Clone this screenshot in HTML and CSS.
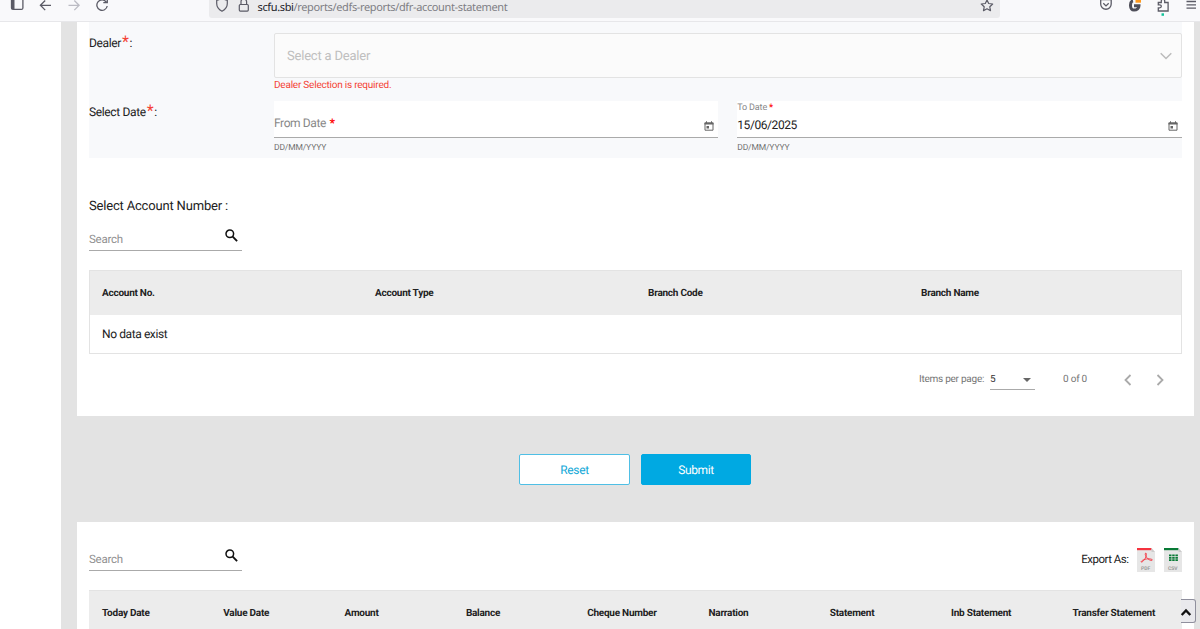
FILE: index.html
```
<!DOCTYPE html>
<html lang="en">
<head>
<meta charset="utf-8">
<title>Account Statement</title>
<link rel="stylesheet" href="styles.css">
</head>
<body>
<header class="browser">
  <svg class="nav-icons" width="120" height="21" viewBox="0 0 120 21" fill="none" stroke="#5b5b66" stroke-width="1.3">
    <rect x="11.5" y="-2" width="11.4" height="11.4" rx="1.5"/><path d="M13 0v9" stroke-width="3"/>
    <path d="M51 5.3H40.5M45.2.5l-4.8 4.8 4.8 4.8"/>
    <path d="M68.500 5.300H79M74.300.5l4.800 4.800-4.800 4.800" stroke="#bcbcc4"/>
    <path d="M106.200 2A5.200 5.200 0 1 0 107.200 6M107.300-1v3.700h-4"/>
  </svg>
  <div class="address">
    <svg width="40" height="18" viewBox="0 0 40 18" fill="none" stroke="#5b5b66" stroke-width="1.2"><path d="M7-1.500l5.300 2v3c0 3.500-2 6-5.300 7.700C3.700 9.500 1.700 7 1.700 3.500v-3z"/><rect x="24.300" y="4.500" width="9" height="6.600" rx="1"/><path d="M26 4.500V1.800a2.800 2.800 0 0 1 5.600 0v2.700"/></svg>
    <span class="url"><b>scfu.sbi</b>/reports/edfs-reports/dfr-account-statement</span>
    <svg class="star" width="14" height="18" viewBox="0 0 14 18" fill="none" stroke="#5b5b66" stroke-width="1.2" stroke-linejoin="round"><path d="M7 0l1.700 3.500 4 .5-2.900 2.800.7 3.900L7 8.800l-3.500 1.900.7-3.900L1.300 4l4-.5z"/></svg>
  </div>
  <svg class="tools" width="110" height="21" viewBox="1090 0 110 21" fill="none" stroke="#5b5b66" stroke-width="1.300">
    <path d="M1100.700-.5h10.500v4.500a5.250 5.250 0 0 1-10.500 0zM1103.300 3.300l2.700 2.600 2.700-2.600"/>
    <path d="M1133 .8c-3.400.7-3.600 9.300 1 9.300 3 0 5-1.800 5-4.300h-5" stroke="#4f4f5a" stroke-width="3"/><path d="M1135.500 0h5.500v2.700h-5.500z" fill="#ff9a1f" stroke="none"/>
    <path d="M1158.300 11V7.800h1.500a1.500 1.500 0 0 0 0-3h-1.500V2.500h3V1a1.700 1.700 0 0 1 3.400 0v1.500h3.400V11z"/><path d="M1161.500 13.300h2.500v2.500h-2.500z" fill="#13c39a" stroke="none"/>
    <path d="M1186.500 1.500h9.500M1186.500 4.800h9.500M1186.500 8.200h9.500"/>
  </svg>
</header>

<main class="page">
  <section class="panel filters">
    <div class="form">
      <div class="row dealer">
        <label>Dealer<i>*</i>:</label>
        <div class="field">
          <div class="select"><span>Select a Dealer</span>
            <svg width="12" height="8" viewBox="0 0 12 8" fill="none" stroke="#bbb" stroke-width="1.500"><path d="M.7 1.200L6 6.500l5.300-5.300"/></svg>
          </div>
          <div class="error">Dealer Selection is required.</div>
        </div>
      </div>
      <div class="row dates">
        <label>Select Date<i>*</i>:</label>
        <div class="field date">
          <div class="input"><div class="placeholder">From Date <em>*</em></div>
            <svg class="cal" width="10" height="10" viewBox="0 0 10 10"><path d="M1 2h8v7.200H1z" fill="none" stroke="#666"/><path d="M.5 1.500h9v2h-9zM2 .3h1v2H2zM7 .3h1v2H7zM2.500 5H5v2.500H2.500z" fill="#666"/></svg></div>
          <div class="hint">DD/MM/YYYY</div>
        </div>
        <div class="field date">
          <div class="input"><div><div class="float">To Date <em>*</em></div><div class="value">15/06/2025</div></div>
            <svg class="cal" width="10" height="10" viewBox="0 0 10 10"><path d="M1 2h8v7.200H1z" fill="none" stroke="#666"/><path d="M.5 1.500h9v2h-9zM2 .3h1v2H2zM7 .3h1v2H7zM2.500 5H5v2.500H2.500z" fill="#666"/></svg></div>
          <div class="hint">DD/MM/YYYY</div>
        </div>
      </div>
    </div>

    <h2>Select Account Number :</h2>
    <div class="search"><span>Search</span><svg width="14" height="14" viewBox="0 0 14 14" fill="none" stroke="#111" stroke-width="1.500"><circle cx="5.800" cy="4.800" r="3.800"/><path d="M8.700 7.700l4.400 4.400" stroke-width="1.900"/></svg></div>

    <div class="table accounts">
      <div class="head"><span>Account No.</span><span>Account Type</span><span>Branch Code</span><span>Branch Name</span></div>
      <div class="empty">No data exist</div>
    </div>
    <div class="pager">
      <span class="per-page">Items per page:</span>
      <span class="size">5<svg width="8" height="4" viewBox="0 0 8 4"><path d="M0 0h8L4 4z" fill="#666"/></svg></span>
      <span class="range">0 of 0</span>
      <svg class="arrows" width="42" height="12" viewBox="0 0 42 12" fill="none" stroke="#aaa" stroke-width="1.800"><path d="M7.500 1l-5 5 5 5M34.500 1l5 5-5 5"/></svg>
    </div>
  </section>

  <div class="actions"><button class="reset">Reset</button><button class="submit">Submit</button></div>

  <section class="panel results">
    <div class="toolbar">
      <div class="search"><span>Search</span><svg width="14" height="14" viewBox="0 0 14 14" fill="none" stroke="#111" stroke-width="1.500"><circle cx="5.800" cy="4.800" r="3.800"/><path d="M8.700 7.700l4.400 4.400" stroke-width="1.900"/></svg></div>
      <div class="export"><span>Export As:</span>
        <svg width="18" height="24" viewBox="0 0 18 24"><path d="M0 0h14.500L18 4v20H0z" fill="#e6e6e6"/><path d="M0 0h14.500v2.200H0z" fill="#f5333f"/><path d="M14.500 0L18 4h-3.500z" fill="#ccc"/><path d="M8.700 5c1.600.2.500 6-3.600 9-2 .8-1-2.200 4.400-3 6-.8 7.300 1.800 4.300 1.400C10 11.500 7 6 8.700 5z" fill="none" stroke="#f5333f" stroke-width=".9"/><text x="4" y="21.500" class="filetype">PDF</text></svg>
        <svg width="18" height="24" viewBox="0 0 18 24"><path d="M0 0h14.500L18 4v20H0z" fill="#e6e6e6"/><path d="M0 0h14.500v2.200H0z" fill="#087a36"/><path d="M14.500 0L18 4h-3.500z" fill="#ccc"/><path d="M5 6.500h2.500v1.800H5zM8.200 6.500h2.500v1.800H8.200zM11.400 6.500h2.500v1.800h-2.500zM5 8.900h2.500v1.800H5zM8.200 8.900h2.500v1.800H8.200zM11.400 8.900h2.500v1.800h-2.500zM5 11.300h2.500v1.800H5zM8.200 11.300h2.500v1.800H8.200zM11.400 11.300h2.500v1.800h-2.500z" fill="#087a36"/><text x="4" y="21.500" class="filetype">CSV</text></svg>
      </div>
    </div>
    <div class="table statement">
      <div class="head"><span>Today Date</span><span>Value Date</span><span>Amount</span><span>Balance</span><span>Cheque Number</span><span>Narration</span><span>Statement</span><span>Inb Statement</span><span>Transfer Statement</span></div>
    </div>
  </section>
</main>
<button class="to-top" aria-label="Back to top"><svg width="10" height="7" viewBox="0 0 10 7" fill="none" stroke="#111" stroke-width="2.400"><path d="M.7 6L5 1.500 9.300 6"/></svg></button>
</body>
</html>
```
FILE: styles.css
```
* { box-sizing: border-box; }
body { margin: 0; width: 1200px; height: 629px; overflow: hidden; background: #fff; color: #222; font-family: Roboto, sans-serif; font-size: 11px; text-rendering: geometricPrecision; }
svg { display: block; flex: none; overflow: visible; }
.browser { display: flex; height: 22px; background: #f9f9fb; border-bottom: 1px solid #e7e7ea; overflow: hidden; }
.address { display: flex; width: 791px; height: 18px; margin-left: 89px; padding: 0 6px 0 6px; background: #ebebed; border-radius: 0 0 3px 3px; }
.url { margin-left: 2.500px; color: #7e7e84; font: 11px/15px "Noto Sans", sans-serif; letter-spacing: -.36px; white-space: nowrap; }
.url b { color: #222228; font-weight: 400; }
.star { margin-left: auto; }
.tools { margin-left: 90px; }
.page { margin-left: 61px; height: 607px; padding: 0 6px 0 15.500px; background: #e3e3e3; }
.panel { background: #fff; padding: 0 12.500px 0 12.500px; }
.filters { height: 394px; }
.form { height: 136px; background: #f8f9fb; }
.row { display: flex; }
.row label { width: 185px; flex: none; font-size: 12px; line-height: 14px; letter-spacing: -.35px; }
.row i { color: #f44336; font-style: normal; font-size: 16px; line-height: 10px; margin: 0 1px; }
.row.dealer { height: 79px; padding-top: 11px; }
.dealer label { padding-top: 3px; }
.field { flex: 1; }
.select { display: flex; align-items: center; justify-content: space-between; height: 45px; padding: 1px 9px 0 12px; background: #fbfbfb; border: 1px solid #e3e3e3; border-radius: 2px; color: #bfbfbf; font-size: 13px; letter-spacing: -.2px; }
.error { margin-top: 2px; color: #f44336; font-size: 10px; line-height: 11px; letter-spacing: -.22px; }
.row.dates label { padding-top: 4px; }
.date + .date { margin-left: 19px; }
.input { display: flex; justify-content: space-between; height: 37px; background: #fff; border-bottom: 1px solid #aaa; }
.placeholder { padding-top: 15px; font-size: 12px; line-height: 14px; letter-spacing: -.4px; color: #888; }
.placeholder em { margin-left: 1px; }
em { color: #f00; font-style: normal; font-weight: 700; }
.float { padding-top: 2px; color: #888; font-size: 9px; line-height: 11px; letter-spacing: -.15px; }
.value { padding-top: 4px; font-size: 12px; line-height: 14px; letter-spacing: -.42px; color: #222; }
.cal { margin: 20px 4px 0 0; }
.hint { margin-top: 5px; color: #737373; font-size: 8.500px; line-height: 11px; letter-spacing: -.15px; }
h2 { margin: 41px 0 0; font-size: 13px; line-height: 16px; font-weight: 400; letter-spacing: -.18px; }
.search { display: flex; justify-content: space-between; width: 153px; height: 22px; margin-top: 14px; padding-right: 4px; border-bottom: 1px solid #aaa; }
.search span { color: #909090; font-size: 11.500px; line-height: 14px; letter-spacing: -.25px; padding-top: 3px; }
.accounts { margin-top: 19px; height: 84px; border: 1px solid #e3e3e3; }
.head { display: grid; background: #ececec; font-weight: 700; font-size: 10px; line-height: 12px; letter-spacing: -.25px; }
.accounts .head { grid-template-columns: repeat(4, 273px); height: 44px; padding: 17px 0 0 12px; }
.empty { padding: 12px 0 0 12px; font-size: 12px; line-height: 14px; letter-spacing: -.4px; }
.pager { display: flex; justify-content: flex-end; height: 36px; padding: 16px 16.500px 0 0; color: #757575; font-size: 10px; line-height: 20px; letter-spacing: -.25px; }
.size { display: flex; align-items: center; justify-content: space-between; width: 45px; height: 20px; margin-left: 6px; padding-right: 4px; border-bottom: 1px solid #aaa; color: #333; }
.range { margin-left: 28px; line-height: 19px; }
.arrows { margin: 4px 0 0 36px; }
.actions { display: flex; justify-content: center; gap: 11px; height: 106px; padding-top: 38px; }
.actions button { width: 110.500px; height: 31px; padding: 0; border: 1px solid #00a9e2; border-radius: 2px; font: 12px Roboto, sans-serif; letter-spacing: -.35px; text-rendering: inherit; }
.actions .reset { color: #10a7d7; background: #fff; border-color: #4fbfe5; }
.submit { color: #fff; background: #00a9e2; }
.results { height: 107px; padding-top: 26px; }
.toolbar { display: flex; justify-content: space-between; height: 42px; }
.results .search { margin-top: 1px; }
.export { display: flex; gap: 8.500px; }
.export span { font-size: 11.500px; line-height: 23px; letter-spacing: -.5px; }
.filetype { font: 700 5px Roboto, sans-serif; fill: #999; }
.statement .head { grid-template-columns: repeat(9, 121.300px); height: 39px; padding: 17px 0 0 13px; border: 1px solid #e3e3e3; border-width: 1px 0 0; }
.to-top { position: absolute; left: 1181px; top: 599px; width: 15px; height: 24px; padding: 3px 0 0 0; background: #e9e9ed; border: 1px solid #8f8f9d; border-left: 0; border-radius: 0 3px 3px 0; }
```
